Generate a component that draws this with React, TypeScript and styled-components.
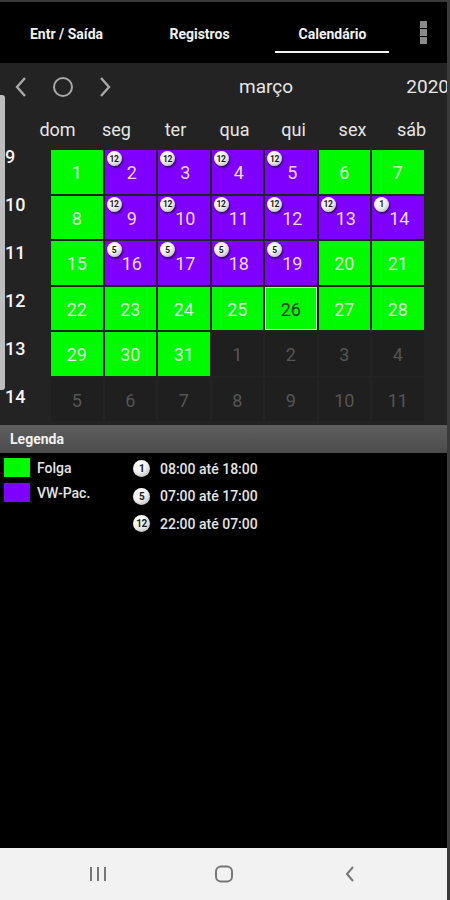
import { createGlobalStyle } from 'styled-components';
import styled from 'styled-components';

const GlobalStyle = createGlobalStyle`
  html, body {
    margin: 0;
    padding: 0;
    background: #000;
  }
  body {
    font-family: Roboto, 'Noto Sans', 'Liberation Sans', sans-serif;
  }
`;

const GREEN = '#00fa00';
const PURPLE = '#8000ff';

type Kind = 'folga' | 'vw' | 'other';

interface Day {
  n: number;
  kind: Kind;
  badge?: number;
  today?: boolean;
}

const schedule: Record<number, { kind: Kind; badge?: number }> = {
  2: { kind: 'vw', badge: 12 },
  3: { kind: 'vw', badge: 12 },
  4: { kind: 'vw', badge: 12 },
  5: { kind: 'vw', badge: 12 },
  9: { kind: 'vw', badge: 12 },
  10: { kind: 'vw', badge: 12 },
  11: { kind: 'vw', badge: 12 },
  12: { kind: 'vw', badge: 12 },
  13: { kind: 'vw', badge: 12 },
  14: { kind: 'vw', badge: 1 },
  16: { kind: 'vw', badge: 5 },
  17: { kind: 'vw', badge: 5 },
  18: { kind: 'vw', badge: 5 },
  19: { kind: 'vw', badge: 5 },
};

const days: Day[] = [
  ...Array.from({ length: 31 }, (_, i) => {
    const n = i + 1;
    const s = schedule[n];
    return { n, kind: s ? s.kind : 'folga', badge: s?.badge, today: n === 26 } as Day;
  }),
  ...Array.from({ length: 11 }, (_, i) => ({ n: i + 1, kind: 'other' as Kind })),
];

const weekdays = ['dom', 'seg', 'ter', 'qua', 'qui', 'sex', 'sáb'];
const weeks = [9, 10, 11, 12, 13, 14];

const shifts = [
  { badge: 1, text: '08:00 até 18:00' },
  { badge: 5, text: '07:00 até 17:00' },
  { badge: 12, text: '22:00 até 07:00' },
];

const Screen = styled.div`
  width: 447px;
  height: 898px;
  border-top: 2px solid #3a3a3a;
  border-right: 3px solid #3a3a3a;
  background: #000;
  display: flex;
  flex-direction: column;
  overflow: hidden;
`;

const TopBar = styled.div`
  height: 61px;
  display: flex;
  align-items: stretch;
  background: #000;
`;

const Tab = styled.div<{ $active?: boolean }>`
  width: 133px;
  display: flex;
  align-items: center;
  justify-content: center;
  position: relative;
  color: #f0f0f0;
  font-size: 14px;
  font-weight: 700;
  padding-top: 2px;
  &::after {
    content: '';
    display: ${(p) => (p.$active ? 'block' : 'none')};
    position: absolute;
    left: 9px;
    right: 10px;
    bottom: 10px;
    height: 2px;
    background: #f2f2f2;
  }
`;

const Menu = styled.div`
  flex: 1;
  display: flex;
  flex-direction: column;
  align-items: center;
  justify-content: center;
  gap: 1px;
  span {
    width: 7px;
    height: 7px;
    background: #8a8a8a;
  }
`;

const Panel = styled.div`
  height: 362px;
  background: #232323;
  position: relative;
`;

const ScrollThumb = styled.div`
  position: absolute;
  left: 0;
  top: 32px;
  width: 5px;
  height: 295px;
  background: #bdbdbd;
  border-radius: 0 3px 3px 0;
`;

const NavRow = styled.div`
  height: 47px;
  display: flex;
  align-items: center;
  color: #e6e6e6;
`;

const NavButton = styled.div`
  width: 42px;
  display: flex;
  justify-content: center;
  align-items: center;
`;

const Month = styled.div`
  flex: 1;
  text-align: center;
  font-size: 19px;
`;

const Year = styled.div`
  font-size: 19px;
  margin-right: -2px;
`;

const WeekdayRow = styled.div`
  display: grid;
  grid-template-columns: repeat(7, 59px);
  padding-left: 28px;
  height: 38px;
  align-items: center;
  color: #e6e6e6;
  font-size: 18px;
  text-align: center;
`;

const Body = styled.div`
  display: flex;
  margin-top: -38px;
`;

const WeekCol = styled.div`
  width: 51px;
  padding-top: 47px;
  display: flex;
  flex-direction: column;
`;

const WeekNum = styled.div`
  height: 48px;
  line-height: 48px;
  padding-left: 5px;
  color: #f4f4f4;
  font-size: 18px;
  font-weight: 500;
  margin-top: -24px;
  margin-bottom: 24px;
`;

const GridWrap = styled.div`
  padding-top: 40px;
`;

const Grid = styled.div`
  display: grid;
  grid-template-columns: repeat(7, 51.5px);
  grid-auto-rows: 43.5px;
  column-gap: 2px;
  row-gap: 2px;
`;

const Cell = styled.div<{ $kind: Kind; $today?: boolean }>`
  position: relative;
  box-sizing: border-box;
  display: flex;
  align-items: center;
  justify-content: center;
  font-size: 18px;
  background: ${(p) => (p.$kind === 'folga' ? GREEN : p.$kind === 'vw' ? PURPLE : '#1f1f1f')};
  color: ${(p) =>
    p.$today ? '#1d3a1d' : p.$kind === 'folga' ? '#dcf5dc' : p.$kind === 'vw' ? '#f0d8ff' : '#555'};
  border: ${(p) => (p.$today ? '1.5px solid #d4d4d4' : 'none')};
  padding-top: 2px;
  padding-left: ${(p) => (p.$kind === 'vw' ? 3 : 0)}px;
`;

const Badge = styled.div<{ $size?: number }>`
  width: ${(p) => p.$size ?? 15}px;
  height: ${(p) => p.$size ?? 15}px;
  border-radius: 50%;
  background: radial-gradient(circle at 35% 30%, #ffffff 0%, #f0f0f0 45%, #a8a8a8 100%);
  box-shadow: 1px 2px 2px rgba(0, 0, 0, 0.55);
  color: #1a1a1a;
  font-size: ${(p) => ((p.$size ?? 15) > 15 ? 10 : 8.5)}px;
  font-weight: 700;
  display: flex;
  align-items: center;
  justify-content: center;
  letter-spacing: -0.5px;
  flex-shrink: 0;
`;

const CellBadge = styled(Badge)`
  position: absolute;
  left: 2px;
  top: 1px;
`;

const LegendBar = styled.div`
  height: 28px;
  background: linear-gradient(#5e5e5e, #4c4c4c);
  display: flex;
  align-items: center;
  padding-left: 10px;
  color: #f0f0f0;
  font-size: 14px;
  font-weight: 700;
`;

const LegendBody = styled.div`
  flex: 1;
  display: flex;
  padding-top: 2px;
`;

const LegendCol = styled.div<{ $width: number; $inset?: number }>`
  box-sizing: border-box;
  width: ${(p) => p.$width}px;
  padding-left: ${(p) => p.$inset ?? 0}px;
  display: flex;
  flex-direction: column;
`;

const LegendRow = styled.div<{ $h: number; $gap: number }>`
  height: ${(p) => p.$h}px;
  display: flex;
  align-items: center;
  gap: ${(p) => p.$gap}px;
  color: #e4e4e4;
  font-size: 14px;
  font-weight: 500;
`;

const Swatch = styled.div<{ $color: string }>`
  width: 26px;
  height: 19px;
  background: ${(p) => p.$color};
`;

const BottomNav = styled.div`
  height: 52px;
  background: #f2f2f2;
  display: flex;
  align-items: center;
  gap: 86px;
  padding-left: 78px;
`;

const NavIcon = styled.div`
  width: 40px;
  display: flex;
  justify-content: center;
`;

export default function App() {
  return (
    <>
      <GlobalStyle />
      <Screen>
        <TopBar>
          <Tab>Entr / Saída</Tab>
          <Tab>Registros</Tab>
          <Tab $active>Calendário</Tab>
          <Menu>
            <span />
            <span />
            <span />
          </Menu>
        </TopBar>

        <Panel>
          <ScrollThumb />
          <NavRow>
            <NavButton>
              <svg width="14" height="22" viewBox="0 0 14 22">
                <path d="M11 2 L3 11 L11 20" fill="none" stroke="#a8a8a8" strokeWidth="2.4" />
              </svg>
            </NavButton>
            <NavButton>
              <svg width="22" height="22" viewBox="0 0 22 22">
                <circle cx="11" cy="11" r="9" fill="none" stroke="#a8a8a8" strokeWidth="2" />
              </svg>
            </NavButton>
            <NavButton>
              <svg width="14" height="22" viewBox="0 0 14 22">
                <path d="M3 2 L11 11 L3 20" fill="none" stroke="#a8a8a8" strokeWidth="2.4" />
              </svg>
            </NavButton>
            <Month>março</Month>
            <Year>2020</Year>
          </NavRow>
          <WeekdayRow>
            {weekdays.map((w) => (
              <div key={w}>{w}</div>
            ))}
          </WeekdayRow>
          <Body>
            <WeekCol>
              {weeks.map((w) => (
                <WeekNum key={w}>{w}</WeekNum>
              ))}
            </WeekCol>
            <GridWrap>
              <Grid>
                {days.map((d, i) => (
                  <Cell key={i} $kind={d.kind} $today={d.today}>
                    {d.badge && <CellBadge>{d.badge}</CellBadge>}
                    {d.n}
                  </Cell>
                ))}
              </Grid>
            </GridWrap>
          </Body>
        </Panel>

        <LegendBar>Legenda</LegendBar>
        <LegendBody>
          <LegendCol $width={133} $inset={4}>
            <LegendRow $h={25} $gap={7}>
              <Swatch $color={GREEN} />
              Folga
            </LegendRow>
            <LegendRow $h={25} $gap={7}>
              <Swatch $color={PURPLE} />
              VW-Pac.
            </LegendRow>
          </LegendCol>
          <LegendCol $width={200}>
            {shifts.map((s) => (
              <LegendRow key={s.badge} $h={27.5} $gap={10}>
                <Badge $size={17}>{s.badge}</Badge>
                {s.text}
              </LegendRow>
            ))}
          </LegendCol>
        </LegendBody>

        <BottomNav>
          <NavIcon>
            <svg width="20" height="18" viewBox="0 0 20 18">
              <path d="M3 2 V16 M10 2 V16 M17 2 V16" stroke="#777" strokeWidth="2" />
            </svg>
          </NavIcon>
          <NavIcon>
            <svg width="20" height="20" viewBox="0 0 20 20">
              <rect x="2" y="2.5" width="16" height="15" rx="5" fill="none" stroke="#777" strokeWidth="2" />
            </svg>
          </NavIcon>
          <NavIcon>
            <svg width="14" height="20" viewBox="0 0 14 20">
              <path d="M10 3 L4 10 L10 17" fill="none" stroke="#777" strokeWidth="2" />
            </svg>
          </NavIcon>
        </BottomNav>
      </Screen>
    </>
  );
}
